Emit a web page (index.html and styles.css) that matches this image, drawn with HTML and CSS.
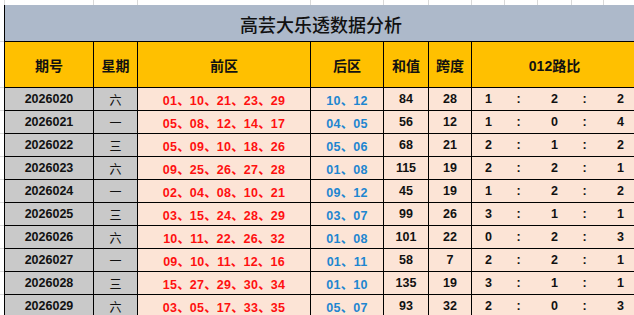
FILE: index.html
```html
<!DOCTYPE html>
<html lang="zh">
<head>
<meta charset="utf-8">
<title>高芸大乐透数据分析</title>
<link rel="stylesheet" href="styles.css">
</head>
<body>
<div class="page">
  <div class="topline">
    <div></div><div></div><div></div><div></div><div></div><div></div><div></div>
    <div></div><div></div><div></div><div></div><div></div>
  </div>
  <div class="main">
    <div class="gutter">
      <div class="g-title"></div><div class="g-head"></div>
      <div class="g-row"></div><div class="g-row"></div><div class="g-row"></div><div class="g-row"></div><div class="g-row"></div>
      <div class="g-row"></div><div class="g-row"></div><div class="g-row"></div><div class="g-row"></div><div class="g-row"></div>
    </div>
    <div class="sheet">
      <div class="title">高芸大乐透数据分析</div>

      <div class="th">期号</div>
      <div class="th">星期</div>
      <div class="th">前区</div>
      <div class="th">后区</div>
      <div class="th">和值</div>
      <div class="th">跨度</div>
      <div class="th">012路比</div>

      <div class="c gray">2026020</div><div class="c gray wk">六</div><div class="c red">01、10、21、23、29</div><div class="c blue">10、12</div><div class="c">84</div><div class="c">28</div>
      <div class="c ratio"><span>1</span><span class="col">:</span><span>2</span><span class="col">:</span><span>2</span></div>

      <div class="c gray">2026021</div><div class="c gray wk">一</div><div class="c red">05、08、12、14、17</div><div class="c blue">04、05</div><div class="c">56</div><div class="c">12</div>
      <div class="c ratio"><span>1</span><span class="col">:</span><span>0</span><span class="col">:</span><span>4</span></div>

      <div class="c gray">2026022</div><div class="c gray wk">三</div><div class="c red">05、09、10、18、26</div><div class="c blue">05、06</div><div class="c">68</div><div class="c">21</div>
      <div class="c ratio"><span>2</span><span class="col">:</span><span>1</span><span class="col">:</span><span>2</span></div>

      <div class="c gray">2026023</div><div class="c gray wk">六</div><div class="c red">09、25、26、27、28</div><div class="c blue">01、08</div><div class="c">115</div><div class="c">19</div>
      <div class="c ratio"><span>2</span><span class="col">:</span><span>2</span><span class="col">:</span><span>1</span></div>

      <div class="c gray">2026024</div><div class="c gray wk">一</div><div class="c red">02、04、08、10、21</div><div class="c blue">09、12</div><div class="c">45</div><div class="c">19</div>
      <div class="c ratio"><span>1</span><span class="col">:</span><span>2</span><span class="col">:</span><span>2</span></div>

      <div class="c gray">2026025</div><div class="c gray wk">三</div><div class="c red">03、15、24、28、29</div><div class="c blue">03、07</div><div class="c">99</div><div class="c">26</div>
      <div class="c ratio"><span>3</span><span class="col">:</span><span>1</span><span class="col">:</span><span>1</span></div>

      <div class="c gray">2026026</div><div class="c gray wk">六</div><div class="c red">10、11、22、26、32</div><div class="c blue">01、08</div><div class="c">101</div><div class="c">22</div>
      <div class="c ratio"><span>0</span><span class="col">:</span><span>2</span><span class="col">:</span><span>3</span></div>

      <div class="c gray">2026027</div><div class="c gray wk">一</div><div class="c red">09、10、11、12、16</div><div class="c blue">01、11</div><div class="c">58</div><div class="c">7</div>
      <div class="c ratio"><span>2</span><span class="col">:</span><span>2</span><span class="col">:</span><span>1</span></div>

      <div class="c gray">2026028</div><div class="c gray wk">三</div><div class="c red">15、27、29、30、34</div><div class="c blue">01、10</div><div class="c">135</div><div class="c">19</div>
      <div class="c ratio"><span>3</span><span class="col">:</span><span>1</span><span class="col">:</span><span>1</span></div>

      <div class="c gray">2026029</div><div class="c gray wk">六</div><div class="c red">03、05、17、33、35</div><div class="c blue">05、07</div><div class="c">93</div><div class="c">32</div>
      <div class="c ratio"><span>2</span><span class="col">:</span><span>0</span><span class="col">:</span><span>3</span></div>
    </div>
  </div>
</div>
</body>
</html>
```

FILE: styles.css
```css
html, body {
  margin: 0;
  padding: 0;
  background: #ffffff;
}
body {
  width: 634px;
  height: 315px;
  overflow: hidden;
  font-family: "Liberation Sans", "Noto Sans CJK SC", sans-serif;
  color: #111111;
}
.page {
  width: 660px;
}
.topline {
  display: grid;
  grid-template-columns: 4px 88px 43px 172px 72px 44px 42px 32px 32px 33px 31px 40px;
  column-gap: 1px;
  height: 5px;
  background: #d9d9d9;
}
.topline div {
  background: #ffffff;
}
.main {
  display: flex;
}
.gutter {
  width: 4px;
  display: flex;
  flex-direction: column;
}
.gutter div {
  box-sizing: border-box;
  border-bottom: 1px solid #d9d9d9;
}
.g-title { height: 37px; }
.g-head { height: 46px; }
.g-row { height: 23px; }

.sheet {
  display: grid;
  grid-template-columns: 88px 43px 172px 72px 44px 42px 165px;
  grid-template-rows: 36px 45px repeat(10, 22px);
  gap: 1px;
  background: #000000;
  border-left: 1px solid #000000;
  border-right: 1px solid #000000;
}
.title {
  grid-column: 1 / -1;
  background: #adb9ca;
  display: flex;
  align-items: center;
  justify-content: center;
  font-family: "Noto Sans CJK SC", sans-serif;
  font-size: 18px;
  font-weight: 500;
  color: #111111;
  padding-top: 1px;
}
.th {
  background: #ffc000;
  display: flex;
  align-items: center;
  justify-content: center;
  font-size: 14px;
  font-weight: 700;
  color: #111111;
}
.c {
  background: #fce4d6;
  display: flex;
  align-items: center;
  justify-content: center;
  font-size: 12.5px;
  font-weight: 700;
  white-space: nowrap;
}
.gray {
  background: #c9c9c9;
}
.wk {
  font-family: "Noto Sans CJK SC", sans-serif;
  font-size: 12px;
  font-weight: 400;
}
.red {
  color: #ff1010;
  letter-spacing: 0.2px;
}
.blue {
  color: #1e86d0;
  letter-spacing: 0.2px;
}
.ratio {
  display: grid;
  grid-template-columns: 33px 33px 33px 33px 33px;
  align-items: center;
}
.ratio span {
  text-align: center;
}
.ratio .col {
  padding-right: 6px;
}
```
